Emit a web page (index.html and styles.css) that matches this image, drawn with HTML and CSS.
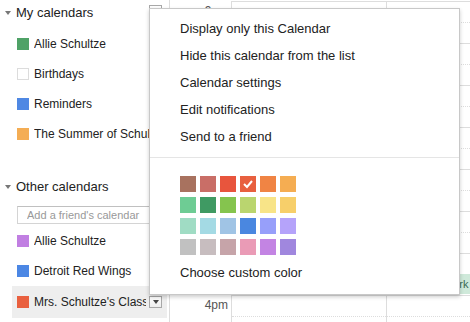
FILE: index.html
```html
<!DOCTYPE html>
<html>
<head>
<meta charset="utf-8">
<link rel="stylesheet" href="styles.css">
</head>
<body>
<div class="app">
  <aside class="sidebar">
    <section class="section">
      <div class="sec-head">
        <span class="tri"></span>
        <span class="sec-title">My calendars</span>
        <span class="dd"><span class="dd-tri"></span></span>
      </div>
      <ul class="cal-list">
        <li class="cal"><span class="sw" style="background:#4fa267"></span><span class="name">Allie Schultze</span></li>
        <li class="cal"><span class="sw sw-empty"></span><span class="name">Birthdays</span></li>
        <li class="cal"><span class="sw" style="background:#4f88e3"></span><span class="name">Reminders</span></li>
        <li class="cal"><span class="sw" style="background:#f4ad54"></span><span class="name">The Summer of Schultze</span></li>
      </ul>
    </section>
    <section class="section other">
      <div class="sec-head">
        <span class="tri"></span>
        <span class="sec-title">Other calendars</span>
      </div>
      <div class="add"><input class="add-input" type="text" placeholder="Add a friend's calendar"></div>
      <ul class="cal-list list-other">
        <li class="cal"><span class="sw" style="background:#c17fe2"></span><span class="name">Allie Schultze</span></li>
        <li class="cal"><span class="sw" style="background:#4c87e4"></span><span class="name">Detroit Red Wings</span></li>
        <li class="cal cal-active"><span class="sw" style="background:#e9603f"></span><span class="name">Mrs. Schultze's Class</span><span class="dd"><span class="dd-tri"></span></span></li>
      </ul>
    </section>
  </aside>

  <main class="grid">
    <div class="times">
      <div class="slot"><span class="tlabel">9am</span></div>
      <div class="slot"><span class="tlabel">10am</span></div>
      <div class="slot"><span class="tlabel">11am</span></div>
      <div class="slot"><span class="tlabel">12pm</span></div>
      <div class="slot"><span class="tlabel">1pm</span></div>
      <div class="slot"><span class="tlabel">2pm</span></div>
      <div class="slot"><span class="tlabel">3pm</span></div>
      <div class="slot"><span class="tlabel">4pm</span></div>
    </div>
    <div class="day day-1">
      <div class="hour"></div><div class="hour"></div><div class="hour"></div><div class="hour"></div>
      <div class="hour"></div><div class="hour"></div><div class="hour"></div><div class="hour"></div>
    </div>
    <div class="day day-2">
      <div class="hour"></div><div class="hour"></div><div class="hour"></div><div class="hour"></div>
      <div class="hour"></div><div class="hour"></div><div class="hour"></div><div class="hour"></div>
      <div class="event">Work</div>
    </div>
  </main>

  <div class="menu">
    <ul class="menu-items">
      <li>Display only this Calendar</li>
      <li>Hide this calendar from the list</li>
      <li>Calendar settings</li>
      <li>Edit notifications</li>
      <li>Send to a friend</li>
    </ul>
    <div class="menu-sep"></div>
    <div class="palette">
      <span class="pc" style="background:#a8725f"></span>
      <span class="pc" style="background:#c96e67"></span>
      <span class="pc" style="background:#e8553d"></span>
      <span class="pc pc-on" style="background:#e8603f"><svg width="16" height="16" viewBox="0 0 16 16"><polyline points="4,8 7,11 12,5" fill="none" stroke="#fff" stroke-width="2"/></svg></span>
      <span class="pc" style="background:#f08444"></span>
      <span class="pc" style="background:#f5ad52"></span>

      <span class="pc" style="background:#6ecc94"></span>
      <span class="pc" style="background:#3f9a63"></span>
      <span class="pc" style="background:#85c44e"></span>
      <span class="pc" style="background:#bad56f"></span>
      <span class="pc" style="background:#f8e488"></span>
      <span class="pc" style="background:#f7cf6a"></span>

      <span class="pc" style="background:#a0dcc4"></span>
      <span class="pc" style="background:#a4dae4"></span>
      <span class="pc" style="background:#a0c4e5"></span>
      <span class="pc" style="background:#4a87e0"></span>
      <span class="pc" style="background:#979ffa"></span>
      <span class="pc" style="background:#b5a3fa"></span>

      <span class="pc" style="background:#c1c1c1"></span>
      <span class="pc" style="background:#c7bdbf"></span>
      <span class="pc" style="background:#c6a4a9"></span>
      <span class="pc" style="background:#ea9bb6"></span>
      <span class="pc" style="background:#c384e3"></span>
      <span class="pc" style="background:#a087de"></span>
    </div>
    <div class="custom">Choose custom color</div>
  </div>
</div>
</body>
</html>
```

FILE: styles.css
```css
* { box-sizing: border-box; }

html, body {
  margin: 0;
  padding: 0;
  width: 470px;
  height: 322px;
  overflow: hidden;
  background: #fff;
  font-family: "Liberation Sans", Arial, sans-serif;
  color: #222;
}

ul { list-style: none; margin: 0; padding: 0; }

.app {
  position: relative;
  display: flex;
  width: 470px;
  height: 322px;
}

/* ---------- sidebar ---------- */
.sidebar {
  width: 169px;
  flex: none;
  padding-right: 2px;
}

.sec-head {
  display: flex;
  align-items: center;
  height: 24px;
  padding-left: 5px;
  padding-right: 5px;
}

.tri {
  width: 0;
  height: 0;
  border-left: 3.5px solid transparent;
  border-right: 3.5px solid transparent;
  border-top: 4px solid #777;
  margin-right: 5px;
  margin-top: 1px;
}

.sec-title {
  font-size: 13px;
  color: #222;
}

.dd {
  margin-left: auto;
  width: 13px;
  height: 12px;
  border: 1px solid #a8a8a8;
  background: linear-gradient(#fff, #ededed);
  display: flex;
  align-items: center;
  justify-content: center;
  flex: none;
}

.dd-tri {
  width: 0;
  height: 0;
  border-left: 3px solid transparent;
  border-right: 3px solid transparent;
  border-top: 4px solid #444;
}

.sec-head .dd {
  align-self: flex-start;
  margin-top: 5px;
}

.cal-list { margin-top: 5px; }

.cal {
  display: flex;
  align-items: center;
  height: 30px;
  margin-left: 12px;
  padding-left: 5px;
  padding-right: 5px;
  font-size: 12px;
  color: #222;
}

.sw {
  width: 12px;
  height: 12px;
  flex: none;
  margin-right: 5px;
}

.sw-empty {
  background: #fff;
  border: 1px solid #dcdcdc;
}

.name {
  white-space: nowrap;
  overflow: hidden;
  flex: 1;
  min-width: 0;
}

.other { margin-top: 25px; }

.add {
  margin-top: 8px;
  padding-left: 17px;
  padding-right: 4px;
}

.add-input {
  display: block;
  width: 100%;
  height: 18px;
  margin: 0;
  border: 1px solid #d4d4d4;
  border-top-color: #c0c0c0;
  padding: 0 0 0 9px;
  font-family: "Liberation Sans", Arial, sans-serif;
  font-size: 11px;
  color: #222;
  outline: none;
}

.add-input::placeholder { color: #999; }

.list-other { margin-top: 2px; }

.cal-active {
  background: #eee;
  height: 32px;
}

.cal-active .name { margin-right: 3px; }

/* ---------- grid ---------- */
.grid {
  flex: 1;
  display: flex;
  padding-top: 1px;
  border-left: 1px solid #ddd;
  height: 322px;
  overflow: hidden;
}

.times {
  width: 62px;
  flex: none;
  border-right: 1px solid #ddd;
}

.slot {
  height: 42px;
  text-align: right;
  padding-right: 3px;
}

.tlabel {
  font-size: 12px;
  line-height: 14px;
  color: #555;
}

.day {
  position: relative;
  flex: none;
}

.day-1 {
  width: 155px;
  border-right: 1px solid #ddd;
}

.day-2 { flex: 1; }

.hour {
  position: relative;
  height: 42px;
  border-top: 1px solid #ddd;
}

.hour::after {
  content: "";
  position: absolute;
  left: 0;
  right: 0;
  top: 20px;
  border-top: 1px dotted #ddd;
}

.event {
  position: absolute;
  left: 53px;
  right: -20px;
  top: 273px;
  height: 20px;
  background: #cfe9da;
  color: #3b6b52;
  font-size: 11px;
  line-height: 14px;
  padding: 3px 0 0 3px;
  white-space: nowrap;
}

/* ---------- popup menu ---------- */
.menu {
  position: absolute;
  left: 149px;
  top: 8px;
  width: 311px;
  height: 287px;
  background: #fff;
  border: 1px solid #c8c8c8;
  box-shadow: 0 2px 4px rgba(0, 0, 0, 0.2);
  padding-top: 6px;
  font-size: 13px;
  color: #222;
}

.menu-items li {
  height: 27px;
  line-height: 27px;
  padding-left: 30px;
  white-space: nowrap;
}

.menu-sep {
  margin-top: 7px;
  height: 1px;
  background: #e5e5e5;
}

.palette {
  display: grid;
  grid-template-columns: repeat(6, 16px);
  grid-auto-rows: 16px;
  column-gap: 4px;
  row-gap: 5px;
  margin-top: 18px;
  padding-left: 30px;
}

.pc {
  display: block;
  width: 16px;
  height: 16px;
}

.pc svg { display: block; }

.custom {
  margin-top: 4px;
  height: 27px;
  line-height: 27px;
  padding-left: 30px;
}
```
